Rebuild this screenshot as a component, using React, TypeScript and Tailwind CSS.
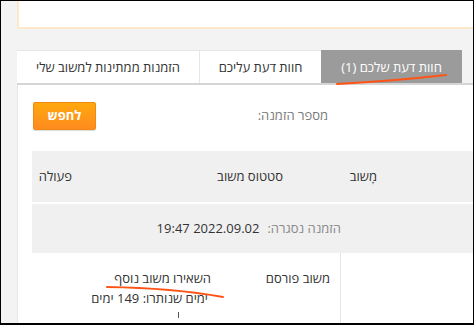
import React from "react";

export default function App() {
  const font = { fontFamily: '"Open Sans", "Liberation Sans", "DejaVu Sans", sans-serif' };
  return (
    <div
      className="relative w-[474px] h-[325px] overflow-hidden border-l border-t border-r border-b-2 border-black bg-[#f3f3f3]"
      style={font}
    >
      <div className="ml-[16px] w-[540px]">
        {/* top box */}
        <div className="h-[28px] bg-white border-l-2 border-b-2 border-[#fde9c9]" />
        {/* tabs */}
        <div className="mt-[21px] flex h-[33px] text-[13px] text-[#333]">
          <div className="w-[182px] bg-white border-t border-[#e6e6e6] flex items-center justify-center pt-[2px]" dir="rtl">
            הזמנות ממתינות למשוב שלי
          </div>
          <div className="w-[122px] bg-white border-t border-l border-[#e6e6e6] flex items-center justify-center pt-[2px]" dir="rtl">
            חוות דעת עליכם
          </div>
          <div className="w-[141px] bg-[#9b9b9b] text-white flex items-center justify-center pt-[2px]" dir="rtl">
            חוות דעת שלכם (1)
          </div>
        </div>
        <div className="h-[2px] bg-[#d5d5d5]" />
        {/* panel */}
        <div className="bg-white border-l border-[#e6e6e6] h-[260px] pt-[17px]">
          <div className="flex items-center">
            <button className="ml-[15px] w-[63px] h-[28px] rounded-[2px] border border-[#ec8a14] bg-gradient-to-b from-[#ffa80c] to-[#ff8a1e] text-white text-[13px] font-bold flex items-center justify-center shadow-[0_1px_1px_rgba(0,0,0,0.15)]" dir="rtl">
              לחפש
            </button>
            <div className="w-[232px] text-right text-[13px] text-[#7a7a7a]" dir="rtl">
              מספר הזמנה:
            </div>
          </div>
          {/* table */}
          <div className="ml-[14px] mt-[21px]">
            <div className="flex h-[51px] items-center bg-[#f0f0f0] text-[13px] text-[#333]">
              <div className="w-[40px] text-right" dir="rtl">פעולה</div>
              <div className="w-[211px] text-right" dir="rtl">סטטוס משוב</div>
              <div className="w-[94px] text-right" dir="rtl">מָשוב</div>
            </div>
            <div className="h-[2px] bg-white" />
            <div className="flex h-[49px] items-center bg-[#f0f0f0]">
              <div className="w-[309px] flex justify-start gap-[8px] items-center" dir="rtl">
                <span className="text-[13px] text-[#8a8a8a]">הזמנה נסגרה:</span>
                <span className="text-[13px] text-[#333]">2022.09.02 19:47</span>
              </div>
            </div>
            <div className="flex h-[80px] text-[13px] text-[#333] leading-[20px]">
              <div className="w-[189px] pr-[10px] pt-[15px] text-right" dir="rtl">
                <div>השאירו משוב נוסף</div>
                <div className="mr-[3px]">ימים שנותרו: 149 ימים</div>
                <div className="mt-[4px] mr-[32px] w-px h-[6px] bg-[#555] ml-auto" />
              </div>
              <div className="w-[120px] pr-[10px] pt-[15px] text-right border-r border-[#e6e6e6]" dir="rtl">
                משוב פורסם
              </div>
              <div className="flex-1" />
            </div>
          </div>
        </div>
      </div>
      {/* annotations */}
      <svg className="absolute left-0 top-0 pointer-events-none" width="474" height="325">
        <path d="M336 83 Q 392 80 445 74" stroke="#ff5415" strokeWidth="2" fill="none" strokeLinecap="round" />
        <path d="M106 286 Q 172 287 222 296" stroke="#ff5415" strokeWidth="2" fill="none" strokeLinecap="round" />
      </svg>
    </div>
  );
}
